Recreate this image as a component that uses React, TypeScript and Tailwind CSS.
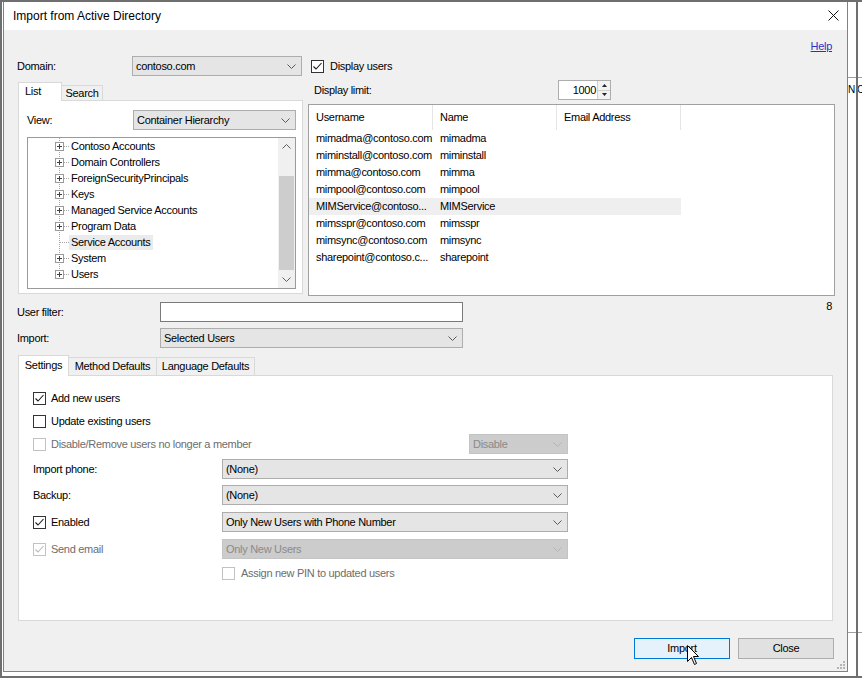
import React from "react";

type ComboProps = { text: string; className: string; disabled?: boolean };

function Chevron({ color = "#5a5a5a", up = false }: { color?: string; up?: boolean }) {
  return (
    <svg width="9" height="5" viewBox="0 0 9 5" className="shrink-0">
      <path
        d={up ? "M0.5 4.5 L4.5 0.5 L8.5 4.5" : "M0.5 0.5 L4.5 4.5 L8.5 0.5"}
        fill="none"
        stroke={color}
        strokeWidth="1"
      />
    </svg>
  );
}

function Combo({ text, className, disabled }: ComboProps) {
  return (
    <div
      className={`flex h-[20px] shrink-0 items-center justify-between border pl-[3px] pr-[5px] leading-[14px] ${
        disabled ? "border-[#c4c4c4] bg-[#cccccc] text-[#8a8a8a]" : "border-[#adadad] bg-[#e5e5e5] text-black"
      } ${className}`}
    >
      <span className="whitespace-nowrap">{text}</span>
      <Chevron color={disabled ? "#b4b4b4" : "#5a5a5a"} />
    </div>
  );
}

function Check({ checked, disabled }: { checked?: boolean; disabled?: boolean }) {
  return (
    <div
      className={`flex h-[13px] w-[13px] shrink-0 items-center justify-center border bg-white ${
        disabled ? "border-[#c2c2c2]" : "border-[#333333]"
      }`}
    >
      {checked && (
        <svg width="11" height="11" viewBox="0 0 11 11">
          <path
            d="M1.5 5.5 L4 8 L9.5 2"
            fill="none"
            stroke={disabled ? "#b8b8b8" : "#1a1a1a"}
            strokeWidth="1.1"
          />
        </svg>
      )}
    </div>
  );
}

function TreeGlyph({ plus, last }: { plus: boolean; last?: boolean }) {
  return (
    <svg width="14" height="16" viewBox="0 0 14 16" className="shrink-0">
      <line x1="4.5" y1="0" x2="4.5" y2={last ? 8.5 : 16} stroke="#a6a6a6" strokeDasharray="1 1" />
      <line x1="5" y1="8.5" x2="14" y2="8.5" stroke="#a6a6a6" strokeDasharray="1 1" />
      {plus && (
        <>
          <rect x="0.5" y="4.5" width="8" height="8" fill="white" stroke="#9a9a9a" />
          <line x1="2" y1="8.5" x2="7" y2="8.5" stroke="#404040" />
          <line x1="4.5" y1="6" x2="4.5" y2="11" stroke="#404040" />
        </>
      )}
    </svg>
  );
}

const treeItems: { t: string; plus: boolean; sel?: boolean; last?: boolean }[] = [
  { t: "Contoso Accounts", plus: true },
  { t: "Domain Controllers", plus: true },
  { t: "ForeignSecurityPrincipals", plus: true },
  { t: "Keys", plus: true },
  { t: "Managed Service Accounts", plus: true },
  { t: "Program Data", plus: true },
  { t: "Service Accounts", plus: false, sel: true },
  { t: "System", plus: true },
  { t: "Users", plus: true, last: true },
];

const users: [string, string][] = [
  ["mimadma@contoso.com", "mimadma"],
  ["miminstall@contoso.com", "miminstall"],
  ["mimma@contoso.com", "mimma"],
  ["mimpool@contoso.com", "mimpool"],
  ["MIMService@contoso...", "MIMService"],
  ["mimsspr@contoso.com", "mimsspr"],
  ["mimsync@contoso.com", "mimsync"],
  ["sharepoint@contoso.c...", "sharepoint"],
];

export default function App() {
  return (
    <div className="flex h-[678px] w-[862px] overflow-hidden bg-white font-['Liberation_Sans',Arial,sans-serif] text-[11px] tracking-[-0.3px] text-black">
      <div className="flex h-[678px] w-[862px] shrink-0 border-b-2 border-l-2 border-t-2 border-[#6f6f6f]">
        {/* Dialog window */}
        <div className="ml-[1px] flex h-[670px] w-[845px] shrink-0 flex-col border-x border-b border-[#2a9fd6]">
          {/* Title bar */}
          <div className="flex h-[28px] shrink-0 items-center justify-between bg-white pl-[9px] pr-[8px]">
            <span className="text-[12px] tracking-normal">Import from Active Directory</span>
            <svg width="11" height="11" viewBox="0 0 11 11" className="mb-[2px]">
              <path d="M0.5 0.5 L10.5 10.5 M10.5 0.5 L0.5 10.5" stroke="#111" strokeWidth="1" />
            </svg>
          </div>

          {/* Content */}
          <div className="relative flex flex-1 flex-col bg-[#f0f0f0]">
            {/* Help */}
            <div className="mt-[8px] flex h-[16px] justify-end pr-[15px] leading-[16px]">
              <span className="text-[#3030c8] underline">Help</span>
            </div>

            {/* Domain row */}
            <div className="mt-[2px] flex h-[20px] items-center pl-[13px]">
              <span className="w-[115px] shrink-0">Domain:</span>
              <Combo text="contoso.com" className="w-[170px]" />
              <div className="ml-[9px]">
                <Check checked />
              </div>
              <span className="ml-[6px]">Display users</span>
            </div>

            {/* Two columns */}
            <div className="flex">
              {/* Left column: List/Search tabs */}
              <div className="ml-[14px] flex w-[285px] shrink-0 flex-col pt-[6px]">
                <div className="flex h-[18px] items-end">
                  <div className="relative z-10 -mb-px flex h-[19px] w-[44px] items-center border-x border-t border-[#d9d9d9] bg-white pb-[2px] pl-[6px]">
                    List
                  </div>
                  <div className="flex h-[15px] w-[41px] items-center justify-center border-r border-t border-[#d9d9d9] bg-[#f0f0f0]">
                    Search
                  </div>
                </div>
                <div className="flex h-[194px] flex-col border border-[#d9d9d9] bg-white">
                  <div className="mt-[9px] flex h-[20px] items-center pl-[8px]">
                    <span className="w-[106px] shrink-0">View:</span>
                    <Combo text="Container Hierarchy" className="w-[163px]" />
                  </div>
                  <div className="ml-[8px] mt-[7px] flex h-[152px] w-[269px] border border-[#9a9a9a] bg-white">
                    <div className="flex flex-1 flex-col">
                      {treeItems.map((it) => (
                        <div key={it.t} className="flex h-[16px] items-center pl-[27px]">
                          <TreeGlyph plus={it.plus} last={it.last} />
                          <span
                            className={`whitespace-nowrap px-[2px] leading-[15px] ${it.sel ? "bg-[#ebebeb]" : ""}`}
                          >
                            {it.t}
                          </span>
                        </div>
                      ))}
                    </div>
                    <div className="flex w-[17px] shrink-0 flex-col bg-[#f0f0f0]">
                      <div className="flex h-[17px] items-center justify-center">
                        <Chevron up color="#606060" />
                      </div>
                      <div className="flex flex-1 flex-col px-[1px]">
                        <div className="mt-[21px] h-[94px] bg-[#cdcdcd]" />
                      </div>
                      <div className="flex h-[17px] items-center justify-center">
                        <Chevron color="#606060" />
                      </div>
                    </div>
                  </div>
                </div>
              </div>

              {/* Right column */}
              <div className="ml-[5px] flex w-[527px] shrink-0 flex-col">
                <div className="mt-[4px] flex h-[20px] items-center">
                  <span className="w-[250px] shrink-0 pl-[6px]">Display limit:</span>
                  <div className="flex h-[20px] w-[53px] border border-[#adadad] bg-white">
                    <div className="flex flex-1 items-center justify-end pr-[1px]">1000</div>
                    <div className="flex w-[13px] flex-col border-l border-[#cfcfcf] bg-[#f2f2f2]">
                      <div className="flex flex-1 items-center justify-center border-b border-[#cfcfcf]">
                        <svg width="5" height="3" viewBox="0 0 5 3">
                          <path d="M0 3 L2.5 0 L5 3 Z" fill="#222" />
                        </svg>
                      </div>
                      <div className="flex flex-1 items-center justify-center">
                        <svg width="5" height="3" viewBox="0 0 5 3">
                          <path d="M0 0 L2.5 3 L5 0 Z" fill="#222" />
                        </svg>
                      </div>
                    </div>
                  </div>
                </div>
                <div className="mt-[4px] flex h-[192px] flex-col border border-[#a0a0a0] bg-white">
                  <div className="flex h-[25px] shrink-0">
                    {["Username", "Name", "Email Address"].map((h) => (
                      <div key={h} className="flex w-[124px] items-center border-r border-[#e5e5e5] pl-[7px]">
                        {h}
                      </div>
                    ))}
                  </div>
                  {users.map(([u, n]) => (
                    <div
                      key={u}
                      className={`flex h-[17px] w-[372px] items-center ${n === "MIMService" ? "bg-[#efefef]" : ""}`}
                    >
                      <div className="w-[124px] whitespace-nowrap pl-[7px]">{u}</div>
                      <div className="w-[124px] whitespace-nowrap pl-[7px]">{n}</div>
                    </div>
                  ))}
                </div>
              </div>
            </div>

            {/* User filter row */}
            <div className="mt-[6px] flex h-[20px] items-center pl-[13px]">
              <span className="w-[143px] shrink-0">User filter:</span>
              <div className="h-[20px] w-[303px] shrink-0 border border-[#7a7a7a] bg-white" />
              <div className="flex-1" />
              <span className="-mt-[2px] self-start pr-[15px] leading-[12px]">8</span>
            </div>

            {/* Import row */}
            <div className="mt-[6px] flex h-[20px] items-center pl-[13px]">
              <span className="w-[143px] shrink-0">Import:</span>
              <Combo text="Selected Users" className="w-[303px]" />
            </div>

            {/* Settings tabs */}
            <div className="ml-[14px] mt-[7px] flex h-[20px] items-end">
              <div className="relative z-10 -mb-px flex h-[21px] w-[51px] items-center justify-center border-x border-t border-[#d9d9d9] bg-white pb-[2px]">
                Settings
              </div>
              <div className="flex h-[18px] w-[88px] items-center justify-center border-r border-t border-[#d9d9d9]">
                Method Defaults
              </div>
              <div className="flex h-[18px] w-[98px] items-center justify-center border-r border-t border-[#d9d9d9]">
                Language Defaults
              </div>
            </div>
            <div className="ml-[14px] flex h-[246px] w-[815px] flex-col border border-[#d9d9d9] bg-white pl-[14px]">
              <div className="mt-[14px] flex h-[16px] items-center">
                <Check checked />
                <span className="ml-[5px]">Add new users</span>
              </div>
              <div className="mt-[7px] flex h-[16px] items-center">
                <Check />
                <span className="ml-[5px]">Update existing users</span>
              </div>
              <div className="mt-[5px] flex h-[20px] items-center">
                <div className="flex w-[436px] shrink-0 items-center">
                  <Check disabled />
                  <span className="ml-[5px] text-[#6d6d6d]">Disable/Remove users no longer a member</span>
                </div>
                <Combo text="Disable" className="w-[99px]" disabled />
              </div>
              <div className="mt-[5px] flex h-[20px] items-center">
                <span className="w-[189px] shrink-0">Import phone:</span>
                <Combo text="(None)" className="w-[346px]" />
              </div>
              <div className="mt-[6px] flex h-[20px] items-center">
                <span className="w-[189px] shrink-0">Backup:</span>
                <Combo text="(None)" className="w-[346px]" />
              </div>
              <div className="mt-[7px] flex h-[20px] items-center">
                <div className="flex w-[189px] shrink-0 items-center">
                  <Check checked />
                  <span className="ml-[5px]">Enabled</span>
                </div>
                <Combo text="Only New Users with Phone Number" className="w-[346px]" />
              </div>
              <div className="mt-[7px] flex h-[20px] items-center">
                <div className="flex w-[189px] shrink-0 items-center">
                  <Check checked disabled />
                  <span className="ml-[5px] text-[#6d6d6d]">Send email</span>
                </div>
                <Combo text="Only New Users" className="w-[346px]" disabled />
              </div>
              <div className="mt-[7px] flex h-[14px] items-center pl-[189px]">
                <Check disabled />
                <span className="ml-[6px] text-[#6d6d6d]">Assign new PIN to updated users</span>
              </div>
            </div>

            {/* Buttons */}
            <div className="mt-[17px] flex justify-end gap-[8px] pr-[13px]">
              <div className="relative flex h-[21px] w-[96px] items-center justify-center border border-[#0078d7] bg-[#e5f1fb]">
                Import
                <svg
                  className="absolute left-[52px] top-[6px]"
                  width="13"
                  height="21"
                  viewBox="0 0 13 21"
                >
                  <path
                    d="M0.5 0.5 L0.5 16.5 L4.5 12.5 L7.5 19.5 L9.5 18.5 L6.5 11.5 L11.5 11.5 Z"
                    fill="white"
                    stroke="black"
                    strokeWidth="1"
                  />
                </svg>
              </div>
              <div className="flex h-[21px] w-[96px] items-center justify-center border border-[#adadad] bg-[#e1e1e1]">
                Close
              </div>
            </div>

            {/* Size grip */}
            <svg className="absolute bottom-[1px] right-[1px]" width="10" height="10" viewBox="0 0 10 10">
              {[
                [7, 1],
                [4, 4],
                [7, 4],
                [1, 7],
                [4, 7],
                [7, 7],
              ].map(([x, y]) => (
                <rect key={`${x}-${y}`} x={x} y={y} width="2" height="2" fill="#b5b5b5" />
              ))}
            </svg>
          </div>
        </div>

        {/* Strip of the desktop behind the dialog */}
        <div className="relative flex w-[14px] shrink-0 flex-col">
          <div className="mt-[75px] h-px shrink-0 bg-[#a0a0a0]" />
          <div className="mt-[6px] whitespace-nowrap text-[10px] leading-[12px] tracking-[-0.5px]">N C</div>
          <div className="mt-[536px] h-px shrink-0 bg-[#a0a0a0]" />
          <div className="absolute bottom-0 left-[8px] top-0 w-[2px] bg-[#6f6f6f]" />
        </div>
      </div>
    </div>
  );
}
